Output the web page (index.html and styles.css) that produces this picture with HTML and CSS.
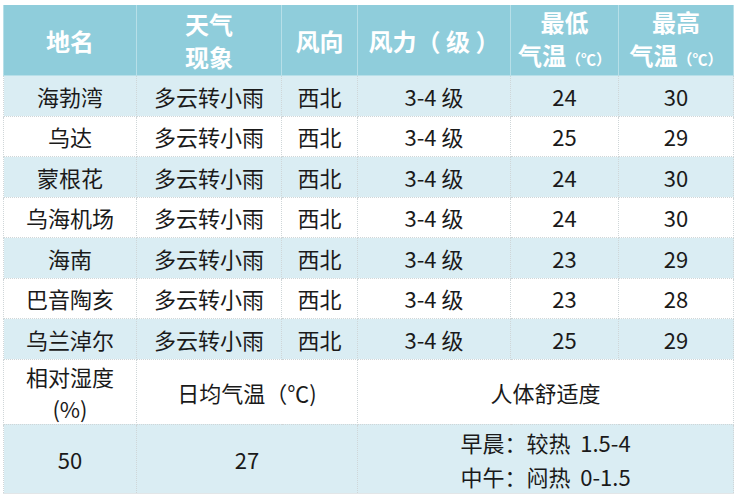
FILE: index.html
```html
<!DOCTYPE html>
<html lang="zh">
<head>
<meta charset="utf-8">
<link rel="stylesheet" href="styles.css">
</head>
<body>
<table class="wx">
  <colgroup>
    <col class="c1"><col class="c2"><col class="c3"><col class="c4"><col class="c5"><col class="c6">
  </colgroup>
  <thead>
    <tr class="head">
      <th>地名</th>
      <th>天气<br>现象</th>
      <th>风向</th>
      <th>风力（ 级 ）</th>
      <th>最低<br>气温<span class="unit">（℃）</span></th>
      <th>最高<br>气温<span class="unit">（℃）</span></th>
    </tr>
  </thead>
  <tbody>
    <tr class="odd"><td>海勃湾</td><td>多云转小雨</td><td>西北</td><td>3-4 级</td><td>24</td><td>30</td></tr>
    <tr class="even"><td>乌达</td><td>多云转小雨</td><td>西北</td><td>3-4 级</td><td>25</td><td>29</td></tr>
    <tr class="odd"><td>蒙根花</td><td>多云转小雨</td><td>西北</td><td>3-4 级</td><td>24</td><td>30</td></tr>
    <tr class="even"><td>乌海机场</td><td>多云转小雨</td><td>西北</td><td>3-4 级</td><td>24</td><td>30</td></tr>
    <tr class="odd"><td>海南</td><td>多云转小雨</td><td>西北</td><td>3-4 级</td><td>23</td><td>29</td></tr>
    <tr class="even"><td>巴音陶亥</td><td>多云转小雨</td><td>西北</td><td>3-4 级</td><td>23</td><td>28</td></tr>
    <tr class="odd"><td>乌兰淖尔</td><td>多云转小雨</td><td>西北</td><td>3-4 级</td><td>25</td><td>29</td></tr>
    <tr class="sub"><td>相对湿度<br>(%)</td><td colspan="2">日均气温（℃)</td><td colspan="3">人体舒适度</td></tr>
    <tr class="last"><td>50</td><td colspan="2">27</td><td colspan="3" class="comfort">早晨：较热&nbsp; 1.5-4<br>中午：闷热&nbsp; 0-1.5</td></tr>
  </tbody>
</table>
</body>
</html>
```
FILE: styles.css
```css
html, body {
  margin: 0;
  padding: 0;
  background: #ffffff;
}
body {
  padding: 5px 0 0 3px;
  font-family: "Noto Sans CJK SC", "Noto Sans", sans-serif;
  color: #1a1a1a;
}
.wx {
  border-collapse: collapse;
  table-layout: fixed;
  width: 730px;
}
.c1 { width: 133px; }
.c2 { width: 145px; }
.c3 { width: 76px; }
.c4 { width: 153px; }
.c5 { width: 108px; }
.c6 { width: 115px; }
.wx th, .wx td {
  padding: 0;
  text-align: center;
  vertical-align: middle;
  border: 1px dotted #cfd6d8;
}
.head th {
  background: #8fcddb;
  color: #ffffff;
  font-weight: 700;
  font-size: 24px;
  line-height: 33px;
  height: 67px;
  border-color: #b7dfe8;
  border-style: solid;
  border-top: none;
}
.unit {
  font-size: 15px;
  font-weight: 700;
}
.wx td {
  font-size: 22px;
  height: 39.5px;
  line-height: 28px;
}
.odd td { background: #daedf3; }
.even td { background: #ffffff; }
.wx .sub td {
  background: #ffffff;
  height: 64px;
  line-height: 32px;
}
.wx .last td {
  background: #daedf3;
  height: 68px;
  border-bottom: 1px solid #e2e6e8;
}
.wx .last .comfort {
  line-height: 34px;
}
```
